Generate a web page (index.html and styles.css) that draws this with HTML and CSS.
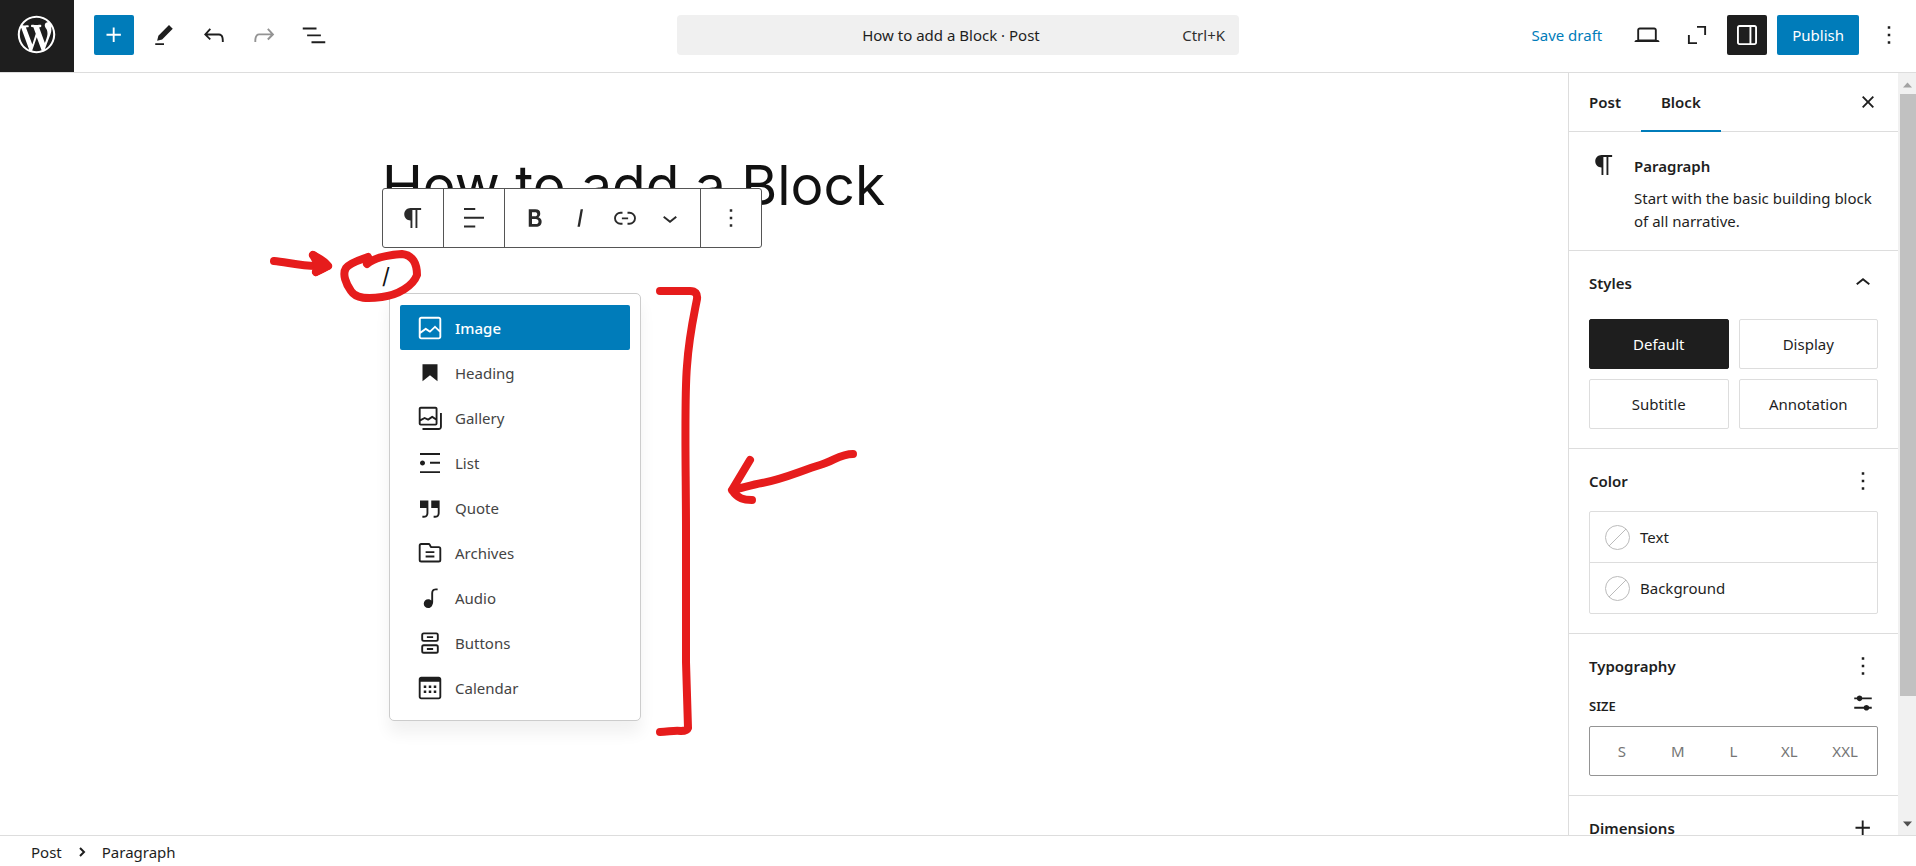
FILE: index.html
```html
<!DOCTYPE html>
<html lang="en">
<head>
<meta charset="utf-8">
<title>How to add a Block</title>
<link rel="stylesheet" href="styles.css">
</head>
<body>
<div class="app">
  <header class="topbar">
    <a class="logo" href="#" aria-label="View posts">
      <svg viewBox="-2 -2 24 24" width="45" height="45"><path d="M20 10c0-5.51-4.49-10-10-10C4.48 0 0 4.49 0 10c0 5.52 4.48 10 10 10 5.51 0 10-4.48 10-10zM7.78 15.37L4.37 6.22c.55-.02 1.17-.08 1.17-.08.5-.06.44-1.13-.06-1.11 0 0-1.45.11-2.37.11-.18 0-.37 0-.58-.01C4.12 2.69 6.87 1.11 10 1.11c2.33 0 4.45.87 6.05 2.34-.68-.11-1.65.39-1.65 1.58 0 .74.45 1.36.9 2.1.35.61.55 1.36.55 2.46 0 1.49-1.4 5-1.4 5l-3.03-8.37c.54-.02.82-.17.82-.17.5-.05.44-1.25-.06-1.22 0 0-1.44.12-2.38.12-.87 0-2.33-.12-2.33-.12-.5-.03-.56 1.2-.06 1.22l.92.08 1.26 3.41zM17.41 10c.24-.64.74-1.87.43-4.25.7 1.29 1.05 2.71 1.05 4.25 0 3.29-1.73 6.24-4.4 7.78.97-2.59 1.94-5.2 2.92-7.78zM6.1 18.09C3.12 16.65 1.11 13.53 1.11 10c0-1.3.23-2.48.72-3.59C3.25 10.3 4.67 14.2 6.1 18.09zm4.03-6.63l2.58 6.98c-.86.29-1.76.45-2.71.45-.79 0-1.57-.11-2.29-.33.81-2.38 1.62-4.74 2.42-7.1z"/></svg>
    </a>
    <div class="tools">
      <button class="icon-btn primary" aria-label="Toggle block inserter"><svg class="icon" viewBox="0 0 24 24"><path d="M11 12.5V17.5H12.5V12.5H17.5V11H12.5V6H11V11H6V12.5H11Z"/></svg></button>
      <button class="icon-btn" aria-label="Tools"><svg class="icon" viewBox="0 0 24 24"><path d="m19 7-3-3-8.5 8.5-1 4 4-1L19 7Zm-7 11.5H5V20h7v-1.5Z"/></svg></button>
      <button class="icon-btn" aria-label="Undo"><svg class="icon" viewBox="0 0 24 24"><path d="M18.3 11.7c-.6-.6-1.4-.9-2.3-.9H6.7l2.9-3.3-1.1-1-4.5 5L8.5 16l1-1-2.7-2.7H16c.5 0 .9.2 1.3.5 1 1 1 3.4 1 4.5v.3h1.5v-.2c0-1.5 0-4.3-1.5-5.7z"/></svg></button>
      <button class="icon-btn disabled" aria-label="Redo" disabled><svg class="icon" viewBox="0 0 24 24"><path d="M15.6 6.5l-1.1 1 2.9 3.3H8c-.9 0-1.7.3-2.3.9-1.4 1.5-1.4 4.2-1.4 5.6v.2h1.5v-.3c0-1.1 0-3.5 1-4.5.3-.3.7-.5 1.3-.5h9.2L14.5 15l1.1 1.1 4.6-4.6-4.6-5z"/></svg></button>
      <button class="icon-btn" aria-label="Document overview"><svg class="icon" viewBox="0 0 24 24"><path d="M3 6h11v1.5H3V6Zm3.5 5.5h11V13h-11v-1.5ZM21 17H10v1.5h11V17Z"/></svg></button>
    </div>
    <button class="command">
      <span class="command-title">How to add a Block · Post</span>
      <span class="command-key">Ctrl+K</span>
    </button>
    <div class="actions">
      <button class="save">Save draft</button>
      <button class="icon-btn" aria-label="View"><svg class="icon" viewBox="0 0 24 24"><path d="M20.5 16h-.7V8c0-1.1-.9-2-2-2H6.2c-1.1 0-2 .9-2 2v8h-.7c-.8 0-1.5.7-1.5 1.5h20c0-.8-.7-1.5-1.5-1.5zM5.7 8c0-.3.2-.5.5-.5h11.6c.3 0 .5.2.5.5v7.6H5.7V8z"/></svg></button>
      <button class="icon-btn" aria-label="Full screen"><svg class="icon line" viewBox="0 0 24 24"><path d="M5.5 12v6.500H12M12 5.500h6.500V12"/></svg></button>
      <button class="icon-btn pressed" aria-label="Settings"><svg class="icon" viewBox="0 0 24 24"><path d="M18 4H6c-1.100 0-2 .9-2 2v12c0 1.100.9 2 2 2h12c1.100 0 2-.9 2-2V6c0-1.100-.9-2-2-2zm-4 14.500H6c-.3 0-.5-.2-.5-.5V6c0-.3.2-.5.5-.5h8v13zm4.500-.5c0 .3-.2.5-.5.5h-2.500v-13H18c.3 0 .5.2.5.5v12z"/></svg></button>
      <button class="publish">Publish</button>
      <button class="icon-btn" aria-label="Options"><svg class="icon" viewBox="0 0 24 24"><path d="M13 19h-2v-2h2v2zm0-6h-2v-2h2v2zm0-6h-2V5h2v2z"/></svg></button>
    </div>
  </header>

  <div class="body">
    <main class="canvas">
      <article class="post">
        <h1 class="post-title">How to add a Block</h1>
        <p class="post-paragraph">/</p>

        <div class="toolbar" role="toolbar" aria-label="Block tools">
          <div class="group"><button class="tool" aria-label="Paragraph"><svg class="icon" viewBox="0 0 24 24"><path d="m9.996 14v-.225h.004v6.225h1.500v-14.500h2.500v14.500h1.500v-14.500h3v-1.500h-8.504c-2.761 0-5 2.239-5 5 0 2.761 2.239 5 5 5z"/></svg></button></div>
          <div class="group"><button class="tool" aria-label="Align text"><svg class="icon" viewBox="0 0 24 24"><path d="M13 5.500H4V4h9v1.500Zm7 7H4V11h16v1.500Zm-7 7H4V18h9v1.500Z"/></svg></button></div>
          <div class="group">
            <button class="tool" aria-label="Bold"><svg class="icon" viewBox="0 0 24 24"><path d="M14.700 11.300c1-.6 1.500-1.600 1.500-3 0-2.300-1.300-3.400-4-3.400H7v14h5.800c1.400 0 2.500-.3 3.300-1 .8-.7 1.200-1.700 1.200-2.900.1-1.900-.8-3.100-2.600-3.700zm-5.100-4h2.300c.6 0 1.100.1 1.400.4.3.3.5.7.5 1.200s-.2 1-.5 1.200c-.3.3-.8.4-1.400.4H9.600V7.300zm4.600 9c-.4.3-1 .4-1.700.4H9.600v-3.900h2.900c.7 0 1.300.2 1.700.5.4.3.6.8.6 1.500s-.2 1.200-.6 1.500z"/></svg></button>
            <button class="tool" aria-label="Italic"><svg class="icon" viewBox="0 0 24 24"><path d="M12.500 5L10 19h1.900l2.500-14z"/></svg></button>
            <button class="tool" aria-label="Link"><svg class="icon" viewBox="0 0 24 24"><path d="M10 17.389H8.444A5.194 5.194 0 1 1 8.444 7H10v1.500H8.444a3.694 3.694 0 0 0 0 7.389H10v1.500ZM14 7h1.556a5.194 5.194 0 0 1 0 10.390H14v-1.500h1.556a3.694 3.694 0 0 0 0-7.390H14V7Zm-4.500 6h5v-1.500h-5V13Z"/></svg></button>
            <button class="tool" aria-label="More"><svg class="icon" viewBox="0 0 24 24"><path d="M17.500 11.600L12 16l-5.500-4.400.9-1.200L12 14l4.500-3.600 1 1.200z"/></svg></button>
          </div>
          <div class="group"><button class="tool" aria-label="Options"><svg class="icon" viewBox="0 0 24 24"><path d="M13 19h-2v-2h2v2zm0-6h-2v-2h2v2zm0-6h-2V5h2v2z"/></svg></button></div>
        </div>

        <div class="inserter" aria-label="Blocks">
          <button class="option selected"><svg class="icon" viewBox="0 0 24 24"><path d="M19 3H5c-1.100 0-2 .9-2 2v14c0 1.100.9 2 2 2h14c1.100 0 2-.9 2-2V5c0-1.100-.9-2-2-2zM5 4.500h14c.3 0 .5.2.5.5v8.400l-3-2.900c-.3-.3-.8-.3-1 0L11.900 14 9 12c-.3-.2-.6-.2-.8 0l-3.600 2.600V5c-.1-.3.1-.5.4-.5zm14 15H5c-.3 0-.5-.2-.5-.5v-2.400l4.100-3 3 1.900c.3.2.7.2.9-.1L16 12l3.500 3.400V19c0 .3-.2.5-.5.5z"/></svg>Image</button>
          <button class="option"><svg class="icon" viewBox="0 0 24 24"><path d="M6 5v13.600l6-4.750 6 4.750V5H6Z"/></svg>Heading</button>
          <button class="option"><svg class="icon" viewBox="0 0 24 24"><path fill-rule="evenodd" d="M16.375 4.500H4.625a.125.125 0 0 0-.125.125v8.254l2.859-1.540a.75.75 0 0 1 .68-.016l2.384 1.142 2.890-2.074a.75.75 0 0 1 .874 0l2.313 1.660V4.625a.125.125 0 0 0-.125-.125Zm.125 9.398-2.750-1.975-2.813 2.020a.75.75 0 0 1-.76.067l-2.444-1.170L4.500 14.583v1.792c0 .069.056.125.125.125h11.750a.125.125 0 0 0 .125-.125v-2.477ZM4.625 3C3.728 3 3 3.728 3 4.625v11.750C3 17.273 3.728 18 4.625 18h11.750c.898 0 1.625-.727 1.625-1.625V4.625C18 3.728 17.273 3 16.375 3H4.625ZM20 8v11c0 .69-.31 1-.999 1H6v1.500h13.001c1.520 0 2.499-.982 2.499-2.500V8H20Z"/></svg>Gallery</button>
          <button class="option"><svg class="icon" viewBox="0 0 24 24"><path d="M4 4v1.500h16V4H4zm8 8.500h8V11h-8v1.500zM4 20h16v-1.500H4V20zm4-8c0-1.100-.9-2-2-2s-2 .9-2 2 .9 2 2 2 2-.9 2-2z"/></svg>List</button>
          <button class="option"><svg class="icon" viewBox="0 0 24 24"><path d="M13 6v6h5.200v4c0 .8-.2 1.400-.5 1.700-.6.6-1.600.6-2.500.5h-.3v1.500h.5c1 0 2.300-.1 3.300-1 .6-.6 1-1.600 1-2.800V6H13zm-9 6h5.200v4c0 .8-.2 1.400-.5 1.700-.6.6-1.600.6-2.500.5h-.3v1.500h.5c1 0 2.300-.1 3.300-1 .6-.6 1-1.600 1-2.800V6H4v6z"/></svg>Quote</button>
          <button class="option"><svg class="icon" viewBox="0 0 24 24"><path fill-rule="evenodd" d="M11.934 7.406a1 1 0 0 0 .914.594H19a.5.5 0 0 1 .5.5v9a.5.5 0 0 1-.5.5H5a.5.5 0 0 1-.5-.5V6a.5.5 0 0 1 .5-.5h5.764a.5.5 0 0 1 .447.276l.723 1.630Zm1.064-1.216a.5.5 0 0 0 .462.310H19a2 2 0 0 1 2 2v9a2 2 0 0 1-2 2H5a2 2 0 0 1-2-2V6a2 2 0 0 1 2-2h5.764a2 2 0 0 1 1.789 1.106l.445 1.084ZM8.500 10.500h7V12h-7v-1.500Zm7 3.500h-7v1.500h7V14Z"/></svg>Archives</button>
          <button class="option"><svg class="icon" viewBox="0 0 24 24"><path d="M17.700 4.300c-1.200 0-2.800 0-3.800 1-.6.6-.9 1.500-.9 2.600V14c-.6-.6-1.500-1-2.500-1C8.600 13 7 14.600 7 16.500S8.600 20 10.500 20c1.500 0 2.800-1 3.300-2.300.5-.8.7-1.800.7-2.500V7.900c0-.7.2-1.200.5-1.600.6-.6 1.800-.6 2.800-.6h.3V4.300h-.4z"/></svg>Audio</button>
          <button class="option"><svg class="icon line" viewBox="0 0 24 24"><rect x="5.750" y="4.250" width="12.500" height="6" rx="1.250"/><rect x="5.750" y="13.750" width="12.500" height="6" rx="1.250"/><path d="M9.500 7.250h5M9.500 16.750h5"/></svg>Buttons</button>
          <button class="option"><svg class="icon" viewBox="0 0 24 24"><path d="M19 3H5c-1.100 0-2 .9-2 2v14c0 1.100.9 2 2 2h14c1.100 0 2-.9 2-2V5c0-1.100-.9-2-2-2zm.5 16c0 .3-.2.5-.5.5H5c-.3 0-.5-.2-.5-.5V7h15v12zM9 10H7v2h2v-2zm0 4H7v2h2v-2zm4-4h-2v2h2v-2zm4 0h-2v2h2v-2zm-4 4h-2v2h2v-2zm4 0h-2v2h2v-2z"/></svg>Calendar</button>
        </div>

        <svg class="marks" viewBox="260 240 620 510" width="620" height="510" aria-hidden="true">
          <path d="M274 261C286 262 300 266 316 266Q324 267 327 265M313 255C318 258 324 260 328 266C324 268 319 270 316 272"/>
          <path class="solid" d="M313 255L328 266L316 272L318 264Z"/>
          <path d="M367 264C374 258 388 255 402 254C413 255 417 264 417 275C413 286 398 295 382 297C368 299 356 299 351 291C346 284 342 274 346 268C351 262 360 260 368 257"/>
          <path d="M660 291H690Q698 291 697 299C694 315 689 336 687 366C684 400 686 470 686 530V662L688 728Q687 731 681 731C674 730 668 732 660 732"/>
          <path d="M853 454C840 454 834 461 820 465C800 471 784 479 762 483C750 485 740 489 732 490L750 460M732 490C738 499 744 500 752 500"/>
        </svg>
      </article>
    </main>

    <aside class="sidebar">
      <div class="panels">
        <div class="tabs">
          <button class="tab">Post</button>
          <button class="tab active">Block</button>
          <button class="icon-btn close" aria-label="Close settings"><svg class="icon" viewBox="0 0 24 24"><path d="M12 13.060l3.712 3.713 1.061-1.060L13.061 12l3.712-3.712-1.060-1.060L12 10.938 8.288 7.227l-1.061 1.060L10.939 12l-3.712 3.712 1.060 1.061L12 13.061z"/></svg></button>
        </div>
        <section class="card">
          <svg class="icon" viewBox="0 0 24 24"><path d="m9.996 14v-.225h.004v6.225h1.500v-14.500h2.500v14.500h1.500v-14.500h3v-1.500h-8.504c-2.761 0-5 2.239-5 5 0 2.761 2.239 5 5 5z"/></svg>
          <div class="card-text">
            <h2 class="heading">Paragraph</h2>
            <p class="desc">Start with the basic building block of all narrative.</p>
          </div>
        </section>
        <section class="panel">
          <div class="panel-head tall"><h2 class="heading">Styles</h2><button class="mini" aria-label="Collapse styles"><svg class="icon" viewBox="0 0 24 24"><path d="M6.500 12.400L12 8l5.500 4.400-.9 1.200L12 10l-4.500 3.600-1-1.200z"/></svg></button></div>
          <div class="styles">
            <button class="style chosen">Default</button>
            <button class="style">Display</button>
            <button class="style">Subtitle</button>
            <button class="style">Annotation</button>
          </div>
        </section>
        <section class="panel">
          <div class="panel-head"><h2 class="heading">Color</h2><button class="mini" aria-label="Color options"><svg class="icon" viewBox="0 0 24 24"><path d="M13 19h-2v-2h2v2zm0-6h-2v-2h2v2zm0-6h-2V5h2v2z"/></svg></button></div>
          <div class="colors">
            <button class="color"><svg class="swatch" viewBox="0 0 25 25"><circle cx="12.500" cy="12.500" r="12"/><path d="M4 21L21 4"/></svg>Text</button>
            <button class="color"><svg class="swatch" viewBox="0 0 25 25"><circle cx="12.500" cy="12.500" r="12"/><path d="M4 21L21 4"/></svg>Background</button>
          </div>
        </section>
        <section class="panel">
          <div class="panel-head short"><h2 class="heading">Typography</h2><button class="mini" aria-label="Typography options"><svg class="icon" viewBox="0 0 24 24"><path d="M13 19h-2v-2h2v2zm0-6h-2v-2h2v2zm0-6h-2V5h2v2z"/></svg></button></div>
          <div class="size-head"><h3 class="size-label" id="size-label">SIZE</h3><button class="mini" aria-label="Set custom size"><svg class="icon" viewBox="0 0 24 24"><path d="m19 7.500h-7.628c-.309-.874-1.142-1.500-2.122-1.500s-1.813.626-2.122 1.500h-2.128v1.500h2.128c.309.874 1.142 1.500 2.122 1.500s1.813-.626 2.122-1.500h7.628zM19 15h-2.128c-.309-.874-1.142-1.500-2.122-1.500s-1.813.626-2.122 1.500h-7.628v1.500h7.628c.309.874 1.142 1.500 2.122 1.500s1.813-.626 2.122-1.500h2.128z"/></svg></button></div>
          <div class="sizes" role="radiogroup" aria-labelledby="size-label">
            <label class="size"><input type="radio" name="size">S</label>
            <label class="size"><input type="radio" name="size">M</label>
            <label class="size"><input type="radio" name="size">L</label>
            <label class="size"><input type="radio" name="size">XL</label>
            <label class="size"><input type="radio" name="size">XXL</label>
          </div>
        </section>
        <section class="panel">
          <div class="panel-head"><h2 class="heading">Dimensions</h2><button class="mini" aria-label="Dimensions options"><svg class="icon" viewBox="0 0 24 24"><path d="M11 12.500V17.500H12.500V12.500H17.500V11H12.500V6H11V11H6V12.500H11Z"/></svg></button></div>
        </section>
      </div>
      <div class="scrollbar" aria-hidden="true">
        <svg class="arrow up" viewBox="0 0 18 20"><path d="M5 14l4.500-5 4.500 5z"/></svg>
        <div class="thumb"></div>
        <svg class="arrow down" viewBox="0 0 18 20"><path d="M5 7l4.500 5 4.500-5z"/></svg>
      </div>
    </aside>
  </div>

  <footer class="footer">
    <a class="crumb" href="#">Post</a>
    <svg class="crumb-sep" viewBox="0 0 10 12"><path d="M3 2l4 4-4 4"/></svg>
    <span class="crumb">Paragraph</span>
  </footer>
</div>
</body>
</html>
```
FILE: styles.css
```css
* { box-sizing: border-box; }

body {
  margin: 0;
  font-family: "Noto Sans", "Open Sans", sans-serif;
  font-size: 15px;
  line-height: 20px;
  color: #1e1e1e;
  background: #fff;
}

button {
  margin: 0;
  padding: 0;
  border: 0;
  background: none;
  font: inherit;
  color: inherit;
  cursor: pointer;
}

h1, h2, h3, p { margin: 0; }
a { color: inherit; text-decoration: none; }

.app { display: flex; flex-direction: column; height: 100vh; overflow: hidden; }

.icon { display: block; flex: none; width: 30px; height: 30px; fill: currentColor; }
.icon.line { fill: none; stroke: currentColor; stroke-width: 1.5; }

/* Top bar */
.topbar {
  display: grid;
  grid-template-columns: 1fr minmax(200px, 562px) 1fr;
  align-items: center;
  position: relative;
  flex: none;
  height: 73px;
  padding-bottom: 2px;
  border-bottom: 1px solid #ddd;
}
.logo {
  position: absolute;
  left: 0;
  top: 0;
  display: flex;
  width: 74px;
  height: 72px;
  padding: 12px 14px;
  background: #1e1e1e;
}
.logo svg { flex: none; fill: #fff; }
.tools, .actions { display: flex; align-items: center; gap: 10px; }
.tools { padding-left: 94px; }
.icon-btn {
  display: flex;
  align-items: center;
  justify-content: center;
  flex: none;
  width: 40px;
  height: 40px;
  border-radius: 2px;
}
.icon-btn.primary { background: #007cba; color: #fff; }
.icon-btn.pressed { background: #1e1e1e; color: #fff; }
.icon-btn.disabled { color: #949494; }
.command {
  display: grid;
  grid-template-columns: 1fr auto 1fr;
  align-items: center;
  height: 40px;
  padding: 0 14px 0 0;
  border-radius: 4px;
  background: #f0f0f0;
}
.command-title { grid-column: 2; }
.command-key { text-align: right; color: #2f2f2f; }
.actions { justify-content: flex-end; padding-right: 7px; }
.save { margin-right: 15px; color: #007cba; }
.publish { height: 40px; padding: 0 15px; border-radius: 2px; background: #007cba; color: #fff; }

/* Editor canvas */
.body { display: flex; flex: 1; min-height: 0; }
.canvas { flex: 1; min-width: 0; overflow: hidden; }
.post { position: relative; max-width: 804px; margin: 0 auto; padding-top: 75px; }
.post-title { font: 400 55px/74px Inter, sans-serif; color: #111; }
.post-paragraph { padding-top: 36px; font: 400 22px/36px Inter, sans-serif; color: #111; }

.toolbar {
  position: absolute;
  left: 0;
  top: 115px;
  display: flex;
  height: 60px;
  border: 1px solid #555;
  border-radius: 3px;
  background: #fff;
}
.group { display: flex; padding: 0 8px 0 7px; border-left: 1px solid #555; }
.group:first-child { border-left: 0; }
.tool { display: flex; align-items: center; justify-content: center; width: 45px; color: #2a2a2a; }

.inserter {
  position: absolute;
  left: 7px;
  top: 220px;
  display: flex;
  flex-direction: column;
  width: 252px;
  padding: 11px 10px 10px;
  border: 1px solid #ccc;
  border-radius: 5px;
  background: #fff;
  box-shadow: 0 12px 16px rgba(0, 0, 0, .06);
}
.option {
  display: flex;
  align-items: center;
  gap: 10px;
  height: 45px;
  padding: 1px 15px 0;
  border-radius: 2px;
  color: #444;
}
.option .icon { color: #1e1e1e; }
.option.selected { background: #007cba; color: #fff; font-weight: 500; }
.option.selected .icon { color: #fff; }

.marks {
  position: absolute;
  left: -122px;
  top: 167px;
  fill: none;
  stroke: #e61c1c;
  stroke-width: 8;
  stroke-linecap: round;
  stroke-linejoin: round;
  pointer-events: none;
}
.marks .solid { fill: #e61c1c; }

/* Settings sidebar */
.sidebar { display: flex; flex: none; width: 348px; border-left: 1px solid #ddd; overflow: hidden; }
.panels { flex: 1; overflow: hidden; }
.tabs { display: flex; height: 59px; border-bottom: 1px solid #ddd; }
.tab { height: 59px; padding: 0 20px 1px; font-weight: 600; }
.tab.active { border-bottom: 2px solid #007cba; padding-bottom: 0; }
.close { margin: 9px 10px 0 auto; }

.heading { font-size: 15px; line-height: 20px; font-weight: 600; }
.card { display: flex; gap: 15px; padding: 18px 20px 17px; }
.card-text { flex: 1; padding-top: 6px; }
.desc { padding-top: 11px; line-height: 23px; }

.panel { padding: 13px 20px 19px; border-top: 1px solid #ddd; }
.panel-head { display: flex; align-items: center; justify-content: space-between; height: 38px; margin-bottom: 11px; }
.panel-head.tall { margin-bottom: 17px; }
.panel-head.short { margin-bottom: 0; }
.mini { display: flex; width: 30px; height: 30px; }
.styles { display: grid; grid-template-columns: 1fr 1fr; gap: 10px; }
.style { height: 50px; border: 1px solid #ddd; border-radius: 2px; }
.style.chosen { border-color: #1e1e1e; background: #1e1e1e; color: #fff; }

.colors { border: 1px solid #ddd; border-radius: 2px; }
.color { display: flex; align-items: center; gap: 10px; width: 100%; height: 50px; padding: 0 15px; }
.color + .color { height: 51px; border-top: 1px solid #ddd; }
.swatch { width: 25px; height: 25px; fill: none; stroke: #bbb; }

.size-head { display: flex; align-items: center; justify-content: space-between; height: 41px; }
.size-head .mini { margin-bottom: 5px; }
.size-label { font-size: 13px; line-height: 20px; font-weight: 600; }
.sizes { display: flex; height: 50px; padding: 0 4px; border: 1px solid #949494; border-radius: 2px; }
.size { flex: 1; display: flex; align-items: center; justify-content: center; color: #757575; cursor: pointer; }
.size input { position: absolute; opacity: 0; width: 0; height: 0; margin: 0; }

.scrollbar { display: flex; flex-direction: column; flex: none; width: 18px; background: #f1f1f1; }
.arrow { flex: none; width: 18px; height: 21px; }
.arrow.up { fill: #a3a3a3; }
.arrow.down { fill: #505050; margin-top: auto; }
.thumb { flex: 0 0 79%; margin-left: 2px; background: #c1c1c1; }

/* Breadcrumb */
.footer {
  display: flex;
  align-items: center;
  flex: none;
  gap: 15px;
  height: 31px;
  padding: 2px 31px 0;
  border-top: 1px solid #ddd;
}
.crumb-sep { width: 10px; height: 12px; fill: none; stroke: #1e1e1e; stroke-width: 2; }
```
